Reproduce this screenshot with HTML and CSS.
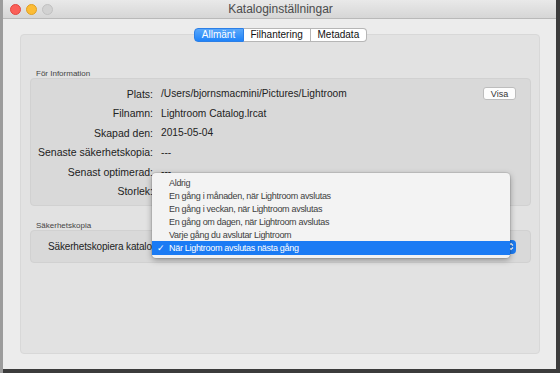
FILE: index.html
```html
<!DOCTYPE html>
<html lang="sv">
<head>
  <meta charset="UTF-8">
  <title>Kataloginställningar</title>
  <link rel="stylesheet" href="styles.css">
</head>
<body>

  <div class="window">
    <div class="titlebar">
      <div class="lights">
        <span class="light red"></span>
        <span class="light yellow"></span>
        <span class="light off"></span>
      </div>
      <div class="title">Kataloginställningar</div>
    </div>

    <div class="content">
      <div class="tabs">
        <button class="tab active">Allmänt</button>
        <button class="tab">Filhantering</button>
        <button class="tab">Metadata</button>
      </div>

      <div class="tabbox">
        <div class="group-label">För Information</div>
        <div class="group info">
          <div class="row">
            <span class="label">Plats:</span>
            <span class="value">/Users/bjornsmacmini/Pictures/Lightroom</span>
            <button class="small-btn">Visa</button>
          </div>
          <div class="row">
            <span class="label">Filnamn:</span>
            <span class="value">Lightroom Catalog.lrcat</span>
          </div>
          <div class="row">
            <span class="label">Skapad den:</span>
            <span class="value">2015-05-04</span>
          </div>
          <div class="row">
            <span class="label">Senaste säkerhetskopia:</span>
            <span class="value">---</span>
          </div>
          <div class="row">
            <span class="label">Senast optimerad:</span>
            <span class="value">---</span>
          </div>
          <div class="row">
            <span class="label">Storlek:</span>
            <span class="value"></span>
          </div>
        </div>

        <div class="group-label second">Säkerhetskopia</div>
        <div class="group backup">
          <div class="row">
            <span class="backup-label">Säkerhetskopiera katalog:</span>
            <div class="popup">
              <span class="popup-arrows">
                <svg width="6" height="9" viewBox="0 0 6 9">
                  <path d="M1 3.5 L3 1.5 L5 3.5 M1 5.5 L3 7.5 L5 5.5" fill="none" stroke="#fff" stroke-width="1.1"/>
                </svg>
              </span>
            </div>
          </div>
        </div>

        <!-- open popup menu -->
        <ul class="menu">
          <li class="menu-item"><span class="check"></span>Aldrig</li>
          <li class="menu-item"><span class="check"></span>En gång i månaden, när Lightroom avslutas</li>
          <li class="menu-item"><span class="check"></span>En gång i veckan, när Lightroom avslutas</li>
          <li class="menu-item"><span class="check"></span>En gång om dagen, när Lightroom avslutas</li>
          <li class="menu-item"><span class="check"></span>Varje gång du avslutar Lightroom</li>
          <li class="menu-item selected"><span class="check">✓</span>När Lightroom avslutas nästa gång</li>
        </ul>
      </div>
    </div>
  </div>

</body>
</html>
```

FILE: styles.css
```css
body {
  margin: 0;
  padding: 0;
  background: linear-gradient(to right, #9c9c9c 3px, #3c3c3c 3px);
  font-family: 'Liberation Sans', Arial, sans-serif;
  height: 373px;
  overflow: hidden;
}

.window {
  margin-left: 3px;
  width: 553px;
  height: 369px;
  background: #ececec;
  display: flex;
  flex-direction: column;
}

.titlebar {
  height: 18px;
  background: linear-gradient(#e9e9e9, #d6d6d6);
  border-bottom: 1px solid #b9b9b9;
  display: flex;
  align-items: center;
}

.lights {
  display: flex;
  gap: 5px;
  padding-left: 7px;
}

.light {
  width: 11px;
  height: 11px;
  border-radius: 50%;
  box-sizing: border-box;
}

.light.red {
  background: #fb5f58;
  border: 1px solid #e1473f;
}

.light.yellow {
  background: #fcbc35;
  border: 1px solid #dfa024;
}

.light.off {
  background: #d2d2d2;
  border: 1px solid #c1c1c1;
}

.title {
  flex: 1;
  text-align: center;
  font-size: 12px;
  color: #4b4b4b;
  margin-right: 48px;
}

.content {
  flex: 1;
  padding: 9px 16px 15px 17px;
  display: flex;
  flex-direction: column;
}

.tabs {
  display: flex;
  justify-content: center;
  margin-bottom: -8px;
  position: relative;
  z-index: 2;
}

.tab {
  height: 14px;
  padding: 0 7px;
  font-family: inherit;
  font-size: 10px;
  line-height: 12px;
  color: #111;
  background: #fff;
  border: 1px solid #b6b6b6;
  border-left: none;
  margin: 0;
}

.tab:first-child {
  border-left: 1px solid #b6b6b6;
  border-radius: 4px 0 0 4px;
}

.tab:last-child {
  border-radius: 0 4px 4px 0;
}

.tab.active {
  width: 50px;
  background: linear-gradient(#5aa8fa, #1f83f9);
  border-color: #2c7fe6;
  color: #fff;
}

.tab:nth-child(2) {
  width: 67px;
}

.tab:nth-child(3) {
  width: 56px;
}

.tabbox {
  flex: 1;
  position: relative;
  background: #e2e2e2;
  border: 1px solid #d8d8d8;
  border-radius: 4px;
  padding: 34px 8px 0 9px;
}

.group-label {
  font-size: 8px;
  line-height: 9px;
  color: #444;
  padding-left: 6px;
}

.group-label.second {
  margin-top: 15px;
}

.group {
  background: #d9d9d9;
  border: 1px solid #d1d1d1;
  border-radius: 4px;
}

.info {
  padding: 5px 0 4px 0;
}

.backup {
  padding: 6px 0 5px 0;
}

.row {
  display: flex;
  align-items: center;
  height: 19.5px;
  font-size: 10.5px;
  color: #222;
}

.label {
  width: 122px;
  text-align: right;
  flex-shrink: 0;
}

.value {
  margin-left: 8px;
  flex: 1;
  font-size: 10.2px;
}

.small-btn {
  width: 33px;
  height: 13px;
  margin-right: 14px;
  padding: 0;
  font-family: inherit;
  font-size: 9px;
  color: #333;
  background: #fdfdfd;
  border: 1px solid #bdbdbd;
  border-radius: 3px;
}

/* label is partly hidden behind the open menu */
.backup-label {
  width: 104px;
  padding-left: 17px;
  font-size: 10px;
  letter-spacing: -0.15px;
  white-space: nowrap;
  overflow: hidden;
  flex-shrink: 0;
}

.popup {
  flex: 1;
  height: 14px;
  margin-right: 14px;
  background: #1c7cf4;
  border-radius: 4px;
  display: flex;
  align-items: center;
  justify-content: flex-end;
}

.popup-arrows {
  width: 10px;
  display: flex;
  justify-content: center;
}

.menu {
  position: absolute;
  left: 131px;
  top: 138px;
  width: 358px;
  margin: 0;
  padding: 3px 0;
  list-style: none;
  background: #f3f3f3;
  border-radius: 4px;
  box-shadow: 0 2px 6px rgba(0, 0, 0, 0.35), 0 0 0 1px rgba(0, 0, 0, 0.08);
  z-index: 5;
}

.menu-item {
  display: flex;
  align-items: center;
  height: 13px;
  padding-left: 5px;
  font-size: 9px;
  letter-spacing: -0.3px;
  color: #404040;
  white-space: nowrap;
}

.menu-item.selected {
  height: 13.5px;
  background: #1b7bf4;
  color: #fff;
}

.check {
  width: 12px;
  flex-shrink: 0;
  font-size: 9px;
}
```
